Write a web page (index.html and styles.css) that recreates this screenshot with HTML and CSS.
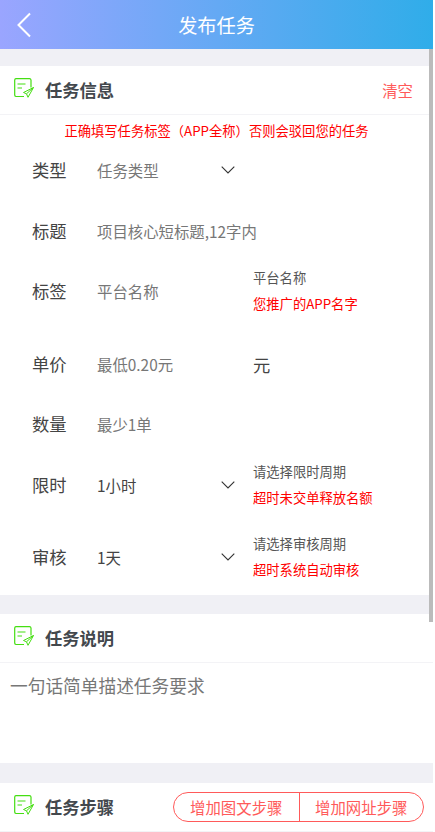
FILE: index.html
```html
<!DOCTYPE html>
<html lang="zh-CN">
<head>
    <meta charset="UTF-8">
    <meta name="viewport" content="width=device-width, initial-scale=1.0">
    <title>发布任务</title>
    <link rel="stylesheet" href="styles.css">
</head>
<body>
    <header class="topbar">
        <a class="back" href="#">
            <svg width="16" height="26" viewBox="0 0 16 26"><path d="M14 1.5 2.5 13 14 24.5" fill="none" stroke="#fff" stroke-width="2"/></svg>
        </a>
        <h1>发布任务</h1>
    </header>

    <section class="panel info">
        <div class="panel-head">
            <svg class="head-icon" viewBox="0 0 20 20"><use href="#task-icon"/></svg>
            <h2>任务信息</h2>
            <a class="clear" href="#">清空</a>
        </div>
        <p class="notice">正确填写任务标签（APP全称）否则会驳回您的任务</p>
        <div class="row row-type">
            <label>类型</label>
            <div class="value muted">任务类型</div>
            <svg class="chevron" viewBox="0 0 14 8"><path d="M.7.7 7 7 13.3.7"/></svg>
        </div>
        <div class="row row-title">
            <label>标题</label>
            <div class="value muted">项目核心短标题,12字内</div>
        </div>
        <div class="row row-tag">
            <label>标签</label>
            <div class="value muted">平台名称</div>
            <div class="hint">
                <span>平台名称</span>
                <span class="red">您推广的APP名字</span>
            </div>
        </div>
        <div class="row row-price">
            <label>单价</label>
            <div class="value muted">最低0.20元</div>
            <div class="unit">元</div>
        </div>
        <div class="row row-count">
            <label>数量</label>
            <div class="value muted">最少1单</div>
        </div>
        <div class="row row-limit">
            <label>限时</label>
            <div class="value">1小时</div>
            <svg class="chevron" viewBox="0 0 14 8"><path d="M.7.7 7 7 13.3.7"/></svg>
            <div class="hint">
                <span>请选择限时周期</span>
                <span class="red">超时未交单释放名额</span>
            </div>
        </div>
        <div class="row row-audit">
            <label>审核</label>
            <div class="value">1天</div>
            <svg class="chevron" viewBox="0 0 14 8"><path d="M.7.7 7 7 13.3.7"/></svg>
            <div class="hint">
                <span>请选择审核周期</span>
                <span class="red">超时系统自动审核</span>
            </div>
        </div>
    </section>

    <section class="panel">
        <div class="panel-head">
            <svg class="head-icon" viewBox="0 0 20 20"><use href="#task-icon"/></svg>
            <h2>任务说明</h2>
        </div>
        <div class="desc">一句话简单描述任务要求</div>
    </section>

    <section class="panel steps">
        <div class="panel-head">
            <svg class="head-icon" viewBox="0 0 20 20"><use href="#task-icon"/></svg>
            <h2>任务步骤</h2>
            <div class="step-btns">
                <a href="#">增加图文步骤</a>
                <a href="#">增加网址步骤</a>
            </div>
        </div>
    </section>

    <div class="scroll-thumb"></div>

    <svg width="0" height="0" class="defs">
        <symbol id="task-icon" viewBox="0 0 20 20">
            <path d="M10 18.500H2A1.500 1.500 0 0 1 .7 17V2A1.500 1.500 0 0 1 2 .7h13.500A1.500 1.500 0 0 1 17 2v7.500" fill="none" stroke="#45de12" stroke-width="1.200"/>
            <path d="M3.500 6h8M3.500 10h4.500" fill="none" stroke="#45de12" stroke-width="1.200"/>
            <path d="M19.500 9.500 9.500 14.500l3 1.300 1.500 3.500 5.500-9.800zM12.500 15.800l7-6.300" fill="none" stroke="#45de12" stroke-width="1" stroke-linejoin="round"/>
        </symbol>
    </svg>
</body>
</html>
```

FILE: styles.css
```css
* {
    box-sizing: border-box;
}
html, body {
    margin: 0;
    height: 100%;
    overflow: hidden;
}
body {
    width: 433px;
    background-color: #f0f0f5;
    font-family: "Noto Sans CJK SC", "Noto Sans", sans-serif;
    color: #333;
    position: relative;
    box-shadow: 2px 0 0 #fff;
}
a {
    text-decoration: none;
    color: inherit;
}
.topbar {
    height: 49px;
    width: 435px;
    padding-right: 2px;
    display: flex;
    align-items: center;
    justify-content: center;
    background: linear-gradient(to right, #9aa5ff, #2fade9);
    position: relative;
}
.topbar h1 {
    margin: 0;
    font-size: 19.200px;
    font-weight: 400;
    color: #fff;
}
.back {
    position: absolute;
    left: 16px;
    top: 12px;
    line-height: 0;
}
.panel {
    background-color: #fff;
    margin-top: 19px;
}
.panel.info {
    margin-top: 17px;
    padding-bottom: 15px;
}
.panel.steps {
    margin-top: 20px;
}
.panel-head {
    height: 49px;
    padding: 0 9px 1px 14px;
    display: flex;
    align-items: center;
    border-bottom: 1px solid #f3f3f6;
}
.head-icon {
    width: 20px;
    height: 20px;
    margin: 0 11px 4px 0;
}
.defs {
    position: absolute;
}
.panel-head h2 {
    margin: 0;
    font-size: 17.300px;
    font-weight: 700;
    color: #43484d;
    flex: 1;
}
.clear {
    font-size: 15.400px;
    color: #ff5a5a;
    margin-right: 11px;
}
.notice {
    margin: 0;
    height: 29px;
    line-height: 31px;
    font-size: 13.300px;
    color: #f00;
    text-align: center;
}
.row {
    display: flex;
    align-items: center;
    padding-left: 32px;
}
.row label {
    width: 65px;
    padding-bottom: 2px;
    font-size: 17.300px;
    color: #444;
}
.value {
    width: 124px;
    font-size: 15.400px;
    color: #444;
    white-space: nowrap;
}
.muted {
    color: #777;
}
.chevron {
    width: 14px;
    height: 8px;
    fill: none;
    stroke: #333;
    stroke-width: 1.100;
}
.hint {
    display: flex;
    flex-direction: column;
    gap: 9px;
    padding-bottom: 2px;
    font-size: 13.300px;
    line-height: 17px;
    color: #555;
    margin-left: 18px;
    white-space: nowrap;
}
.row > .value + .hint,
.row > .value + .unit {
    margin-left: 32px;
}
.red {
    color: #f00;
}
.unit {
    font-size: 17.300px;
    color: #444;
}
.row-type {
    height: 52px;
}
.row-title {
    height: 70px;
}
.row-tag {
    height: 50px;
}
.row-price {
    height: 96px;
}
.row-count {
    height: 24px;
}
.row-limit {
    height: 98px;
}
.row-audit {
    height: 46px;
}
.desc {
    height: 100px;
    padding: 9px 10px;
    font-size: 17.700px;
    line-height: 26px;
    color: #777;
}
.step-btns {
    display: flex;
    height: 30px;
    border: 1px solid #ff5a5a;
    border-radius: 15px;
    font-size: 15.400px;
    color: #ff5a5a;
}
.step-btns a {
    width: 124.500px;
    display: flex;
    align-items: center;
    justify-content: center;
}
.step-btns a + a {
    border-left: 1px solid #ff5a5a;
}
.scroll-thumb {
    position: absolute;
    top: 49px;
    left: 429px;
    width: 4px;
    height: 573px;
    background-color: #bbb;
}
```
